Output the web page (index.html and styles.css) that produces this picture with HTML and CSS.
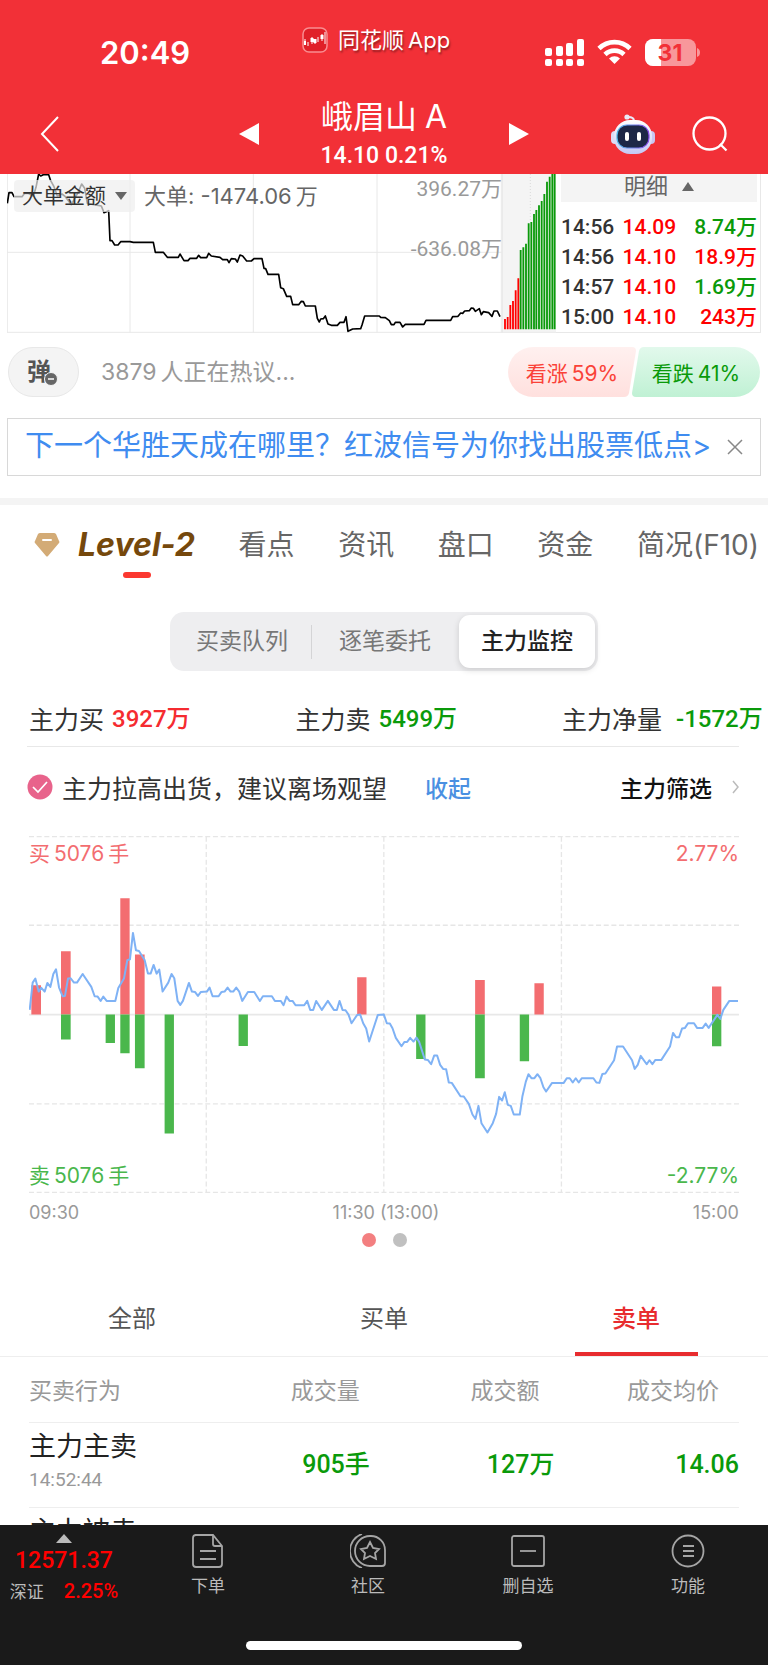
FILE: index.html
```html
<!DOCTYPE html>
<html lang="zh-CN">
<head>
<meta charset="utf-8">
<meta name="viewport" content="width=device-width, initial-scale=1">
<title>峨眉山A</title>
<link rel="stylesheet" href="styles.css">
</head>
<body>
<header class="top">
  <div class="status">
    <time class="clock">20:49</time>
    <div class="app">
      <svg class="app-icon" viewBox="0 0 26 26" aria-hidden="true"><rect x="1" y="1" width="24" height="24" rx="6" fill="#e02028" stroke="#f98d91" stroke-width="1.5"/><g stroke="#fff"><path d="M2 16h2M8.500 13h3M11.500 14h3M18.500 10h3" stroke-width="4"/><path d="M3 12v6M6 15v4M10 10v7M13 12v5M16 10v5M20 7v7M23 5v12" stroke-width="1"/></g></svg>
      <span>同花顺<span class="num">App</span></span>
    </div>
    <div class="signals">
      <svg width="39" height="27" viewBox="0 0 39 27" fill="#fff" aria-hidden="true"><rect x="0" y="9" width="7" height="8" rx="2"/><rect x="11" y="7" width="7" height="10" rx="2"/><rect x="21" y="4" width="7" height="13" rx="2"/><rect x="32" y="0" width="7" height="17" rx="2"/><rect x="0" y="20" width="7" height="7" rx="2"/><rect x="11" y="20" width="7" height="7" rx="2"/><rect x="21" y="20" width="7" height="7" rx="2"/><rect x="32" y="20" width="7" height="7" rx="2"/></svg>
      <svg width="35" height="26" viewBox="0 0 35 26" fill="none" stroke="#fff" stroke-width="4.6" aria-hidden="true"><path d="M2 9.500a22 22 0 0 1 31 0"/><path d="M8 15.500a13.500 13.500 0 0 1 19 0"/><path d="M17.500 25l-5.500-5.500a8 8 0 0 1 11 0z" fill="#fff" stroke="none"/></svg>
      <svg width="55" height="27" viewBox="0 0 55 27" role="img" aria-label="31"><defs><clipPath id="cell"><rect width="51" height="27" rx="8"/></clipPath></defs><g clip-path="url(#cell)"><rect width="51" height="27" fill="#f8979b"/><rect width="16" height="27" fill="#fff"/></g><path d="M52 9q3 1 3 4.500t-3 4.500z" fill="#f8979b"/><text class="battery-text" x="25" y="22" text-anchor="middle">31</text></svg>
    </div>
  </div>
  <div class="nav">
    <button class="icon-btn" aria-label="返回"><svg width="20" height="36" viewBox="0 0 20 36" fill="none" stroke="#fff" stroke-width="2"><path d="M18 1L2 18l16 17"/></svg></button>
    <div class="stock">
      <button class="icon-btn" aria-label="上一只"><svg width="20" height="22" viewBox="0 0 20 22" fill="#fff"><path d="M20 0v22L0 11z"/></svg></button>
      <div class="stock-name"><h1>峨眉山<span class="num">A</span></h1><p>14.10 0.21%</p></div>
      <button class="icon-btn" aria-label="下一只"><svg width="20" height="22" viewBox="0 0 20 22" fill="#fff"><path d="M0 0v22l20-11z"/></svg></button>
    </div>
    <div class="nav-tools">
      <button class="icon-btn" aria-label="助手"><svg width="44" height="40" viewBox="0 0 44 40"><defs><linearGradient id="shell" x1="0" y1="0" x2="0" y2="1"><stop offset="0" stop-color="#fff"/><stop offset="1" stop-color="#c4c8f4"/></linearGradient><linearGradient id="rim"><stop offset="0" stop-color="#4fb8e8"/><stop offset="1" stop-color="#8a48ea"/></linearGradient></defs><path d="M23 7q0-4-6-4" fill="none" stroke="#e9e9f8" stroke-width="2"/><circle cx="16" cy="3" r="2.600" fill="#e9e9f8"/><rect x="0" y="17" width="8" height="13" rx="4" fill="#dcdcf6"/><rect x="36" y="17" width="8" height="13" rx="4" fill="#c9c6f2"/><rect x="3" y="6" width="38" height="34" rx="16" fill="url(#shell)"/><rect x="6" y="11" width="32" height="23" rx="10" fill="#1d2746" stroke="url(#rim)" stroke-width="1.2"/><rect x="14" y="18" width="4" height="9" rx="2" fill="#fff"/><rect x="26" y="18" width="4" height="9" rx="2" fill="#fff"/></svg></button>
      <button class="icon-btn" aria-label="搜索"><svg width="36" height="36" viewBox="0 0 36 36" fill="none" stroke="#fff" stroke-width="2.300"><circle cx="17.500" cy="17.500" r="16"/><path d="M28 28l6.500 6.500"/></svg></button>
    </div>
  </div>
</header>

<main class="content">
  <section class="flow">
    <div class="flow-chart">
      <svg viewBox="21 12 1485 477" aria-hidden="true"><g stroke="#e8e8e8" stroke-width="3" fill="none"><path d="M22 12v476M390 12v476M760 12v476M1131 12v476M1504 12v476M21 247h1485M21 487h1485"/></g>
      <polyline fill="none" stroke="#000" stroke-width="5" stroke-linejoin="round" points="22,100 27,68 36,68 42,80 66,80 74,70 84,70 100,78 108,52 116,12 122,18 130,14 146,14 152,32 162,50 172,78 186,72 196,80 214,104 234,68 245,42 254,55 262,100 282,104 304,108 312,128 326,122 330,212 336,212 344,225 354,225 362,215 390,215 400,217 460,217 466,247 490,247 502,262 535,262 540,252 552,272 564,272 570,265 590,265 596,256 602,263 620,263 626,250 634,258 660,262 668,269 682,269 687,278 694,266 706,267 712,276 720,255 728,258 740,273 754,273 762,266 786,266 792,295 797,296 804,313 836,313 842,353 850,356 860,379 872,379 878,404 896,404 904,394 910,395 916,408 946,408 952,445 958,456 962,447 970,446 976,438 984,462 994,466 1012,466 1020,457 1032,457 1038,440 1044,484 1058,477 1082,476 1086,465 1094,438 1138,438 1142,442 1156,443 1168,452 1174,464 1182,464 1186,457 1200,457 1208,471 1216,463 1272,463 1278,451 1352,451 1358,440 1374,439 1382,429 1388,430 1394,423 1408,422 1414,414 1420,415 1426,424 1438,416 1444,434 1450,425 1466,428 1476,439 1482,423 1492,423 1500,440"/></svg>
      <div class="flow-head"><button class="chip">大单金额<i class="tri down"></i></button><span class="flow-value">大单: -1474.06<span class="wan">万</span></span></div>
      <div class="flow-scale"><span>396.27万</span><span>-636.08万</span></div>
    </div>
    <svg class="flow-bars" viewBox="366 12 162 477" aria-hidden="true"><path fill="#f4f4f4" d="M366 12h162v475H366z"/><path stroke="#ccc" stroke-width="2" stroke-dasharray="3 6" d="M451 12v140"/><path stroke="#f00" stroke-width="5.500" d="M375 478v-31M383 478v-37M391 478v-73M399 478v-85M407 478V361M415 478V325"/><path stroke="#0a9a0a" stroke-width="5.500" d="M422 478V240M430 478V232M438 478V221M446 478V160M454 478V156M462 478V132M469 478V120M477 478V106M485 478V93M493 478V72M501 478V35M509 478V20M517 478V12M524 478V12"/><path stroke="#e8e8e8" stroke-width="3" d="M367 12v476M366 487h162"/></svg>
    <div class="deals">
      <button class="deals-head">明细<i class="tri up"></i></button>
      <table class="deals-table">
        <tr><td>14:56</td><td class="red">14.09</td><td class="green">8.74万</td></tr>
        <tr><td>14:56</td><td class="red">14.10</td><td class="red">18.9万</td></tr>
        <tr><td>14:57</td><td class="red">14.10</td><td class="green">1.69万</td></tr>
        <tr><td>15:00</td><td class="red">14.10</td><td class="red">243万</td></tr>
      </table>
    </div>
  </section>

  <section class="talk">
    <button class="barrage" aria-label="弹幕"><span class="barrage-char">弹</span><svg class="barrage-off" width="14" height="14" viewBox="0 0 14 14"><circle cx="7" cy="7" r="6.500" fill="#666" stroke="#f4f4f4"/><path d="M4 7h6" stroke="#fff" stroke-width="1.500"/></svg></button>
    <span class="talk-text">3879<span class="wan">人正在热议...</span></span>
    <div class="vote">
      <button class="vote-btn up-vote"><svg viewBox="0 0 128 50" preserveAspectRatio="none" aria-hidden="true"><defs><linearGradient id="vu" x1="0" y1="0" x2="0" y2="1"><stop offset="0" stop-color="#fff0ef"/><stop offset="1" stop-color="#ffe0de"/></linearGradient></defs><path fill="url(#vu)" d="M25 0h99q4 0 4 4l-7 42q-1 4-5 4H25a25 25 0 0 1 0-50z"/></svg><span>看涨<span class="num">59%</span></span></button>
      <button class="vote-btn down-vote"><svg viewBox="0 0 128 50" preserveAspectRatio="none" aria-hidden="true"><defs><linearGradient id="vd" x1="0" y1="0" x2="0" y2="1"><stop offset="0" stop-color="#e2f9ec"/><stop offset="1" stop-color="#c0f1d4"/></linearGradient></defs><path fill="url(#vd)" d="M12 0h91a25 25 0 0 1 0 50H4q-4 0-4-4L7 4q1-4 5-4z"/></svg><span>看跌<span class="num">41%</span></span></button>
    </div>
  </section>

  <aside class="promo">
    <a href="#">下一个华胜天成在哪里？红波信号为你找出股票低点&gt;</a>
    <button class="icon-btn" aria-label="关闭"><svg width="16" height="16" viewBox="0 0 16 16" stroke="#888" stroke-width="1.500"><path d="M1 1l14 14M15 1L1 15"/></svg></button>
  </aside>

  <nav class="tabs">
    <a class="tab level" href="#"><svg width="26" height="24" viewBox="0 0 26 24" aria-hidden="true"><path d="M6 0h14q1 0 2 1l3 7q1 1 0 2L14 23q-1 1-2 0L1 10Q0 9 1 8l3-7q1-1 2-1z" fill="#d3ab76"/><path d="M9 7h8" stroke="#fff" stroke-width="2" stroke-linecap="round"/></svg><span class="level-name">Level-2</span></a>
    <a class="tab" href="#">看点</a>
    <a class="tab" href="#">资讯</a>
    <a class="tab" href="#">盘口</a>
    <a class="tab" href="#">资金</a>
    <a class="tab" href="#">简况(F10)</a>
  </nav>

  <div class="segment">
    <button>买卖队列</button><button>逐笔委托</button><button class="on">主力监控</button>
  </div>

  <section class="monitor">
    <div class="stats">
      <span>主力买<b class="buy">3927万</b></span>
      <span>主力卖<b class="sell">5499万</b></span>
      <span>主力净量<b class="sell net">-1572万</b></span>
    </div>
    <div class="advice">
      <svg width="26" height="26" viewBox="0 0 26 26" aria-hidden="true"><circle cx="13" cy="13" r="12.500" fill="#e8638b"/><path d="M6 13l5 5 9-10" fill="none" stroke="#fff" stroke-width="1.700"/></svg>
      <span class="advice-text">主力拉高出货，建议离场观望</span>
      <button class="fold">收起</button>
      <button class="filter">主力筛选<svg width="7" height="14" viewBox="0 0 7 14" fill="none" stroke="#bbb" stroke-width="1.500"><path d="M1 1l5 6-5 6"/></svg></button>
    </div>
    <figure class="chart">
      <svg viewBox="87 46 2131 1072" aria-hidden="true">
        <g stroke="#e6e6e6" stroke-width="4" stroke-dasharray="15 8" fill="none"><path d="M87 48h2131M87 314h2131M87 850h2131M87 1116h2131M619 48v1068M1152 48v1068M1685 48v1068"/></g>
        <path stroke="#e8e8e8" stroke-width="5" d="M87 582h2131"/>
        <g fill="#f36d70"><path d="M94 494h29v88H94zM183 392h29v190h-29zM361 233h28v349h-28zM405 402h29v180h-29zM1072 470h28v112h-28zM1426 478h29v104h-29zM1604 488h28v94h-28zM2137 498h28v84h-28z"/></g>
        <g fill="#4ab74c"><path d="M183 582h29v75h-29zM317 582h28v85h-28zM361 582h28v116h-28zM405 582h29v161h-29zM494 582h28v357h-28zM716 582h28v94h-28zM1249 582h28v133h-28zM1426 582h29v191h-29zM1560 582h28v140h-28zM2137 582h28v95h-28z"/></g>
        <polyline fill="none" stroke="#7fb2f5" stroke-width="6" stroke-linejoin="round" points="89,568 98,486 106,474 116,513 124,502 134,513 142,487 151,499 160,460 168,446 177,500 188,527 195,526 204,474 212,473 222,486 231,486 248,460 274,499 284,527 293,528 302,541 310,528 320,541 346,541 355,502 372,474 382,419 390,416 399,337 408,389 417,391 434,418 444,459 452,459 461,433 470,459 478,447 488,513 505,486 515,460 523,473 533,541 541,553 549,541 567,487 576,513 585,514 594,526 603,514 621,513 629,501 638,527 656,527 665,514 674,513 683,501 692,513 700,513 709,501 718,513 727,541 744,514 763,514 780,541 789,527 816,527 825,541 843,541 851,554 860,528 869,541 878,541 887,554 913,554 922,541 931,568 940,568 949,541 966,568 984,541 1002,568 1011,568 1019,541 1028,568 1037,569 1046,582 1055,608 1072,583 1081,582 1090,608 1099,624 1108,663 1134,583 1152,582 1161,608 1170,609 1178,623 1188,652 1205,677 1214,664 1222,664 1231,652 1241,663 1250,651 1258,664 1275,717 1284,718 1294,731 1303,705 1312,705 1321,733 1330,745 1339,746 1347,786 1356,787 1382,827 1392,828 1407,850 1418,882 1427,895 1436,856 1445,908 1463,936 1479,908 1489,880 1498,829 1507,840 1515,815 1524,853 1533,856 1542,882 1560,882 1568,827 1578,784 1586,761 1595,773 1604,773 1613,761 1622,773 1631,800 1639,813 1657,787 1692,787 1701,773 1710,773 1719,786 1728,773 1737,786 1746,773 1781,773 1790,786 1799,787 1808,760 1817,759 1843,719 1852,678 1870,678 1897,719 1905,745 1914,733 1923,706 1941,731 1949,719 1958,731 1967,718 1985,718 2011,678 2020,637 2029,650 2038,650 2047,624 2056,622 2065,608 2083,608 2092,622 2109,622 2118,609 2127,622 2153,583 2162,595 2171,568 2189,541 2215,541"/>
      </svg>
      <div class="chart-label top-label"><span class="buy-soft">买<span class="num">5076</span>手</span><span class="buy-soft">2.77%</span></div>
      <div class="chart-label bottom-label"><span class="sell-soft">卖<span class="num">5076</span>手</span><span class="sell-soft">-2.77%</span></div>
    </figure>
    <div class="axis"><span>09:30</span><span>11:30 (13:00)</span><span>15:00</span></div>
    <div class="dots"><i class="dot active"></i><i class="dot"></i></div>
  </section>

  <div class="order-tabs">
    <button>全部</button><button>买单</button><button class="on">卖单</button>
  </div>

  <table class="orders">
    <colgroup><col><col class="c-vol"><col class="c-amt"><col class="c-price"></colgroup>
    <thead><tr><th>买卖行为</th><th class="h-vol">成交量</th><th class="h-amt">成交额</th><th class="h-price">成交均价</th></tr></thead>
    <tbody>
      <tr><td><span class="action">主力主卖</span><time>14:52:44</time></td><td>905手</td><td>127万</td><td>14.06</td></tr>
      <tr><td><span class="action">主力被卖</span></td><td></td><td></td><td></td></tr>
    </tbody>
  </table>
</main>

<footer class="bottom">
  <div class="bar">
    <button class="index"><i class="tri up light"></i><span class="index-value">12571.37</span><span class="index-row">深证<b>2.25%</b></span></button>
    <button class="bar-item"><svg width="34" height="34" viewBox="0 0 34 34"><path d="M4 1h18l9 11v18q0 3-3 3H5q-3 0-3-3V4q0-3 3-3z"/><path d="M22 1v9q0 2 2 2h7M9 17h16M9 25h16"/></svg>下单</button>
    <button class="bar-item"><svg width="36" height="34" viewBox="0 0 36 34"><path d="M20 2h1a14 14 0 0 1 14 14v13q0 3-3 3H20A15 15 0 0 1 20 2zM12 0A18 18 0 0 0 12 34M20 8l3 6 6 1-4 4 1 6-6-3-6 3 1-6-4-4 6-1z"/></svg>社区</button>
    <button class="bar-item"><svg width="34" height="34" viewBox="0 0 34 34"><rect x="1" y="2" width="32" height="30" rx="2"/><path d="M9 17h16"/></svg>删自选</button>
    <button class="bar-item"><svg width="34" height="34" viewBox="0 0 34 34"><circle cx="17" cy="17" r="15.500"/><path d="M12 12h11M12 17h11M12 22h11"/></svg>功能</button>
  </div>
  <div class="home"></div>
</footer>
</body>
</html>
```
FILE: styles.css
```css
* { box-sizing: border-box; }
body {
  margin: 0;
  height: 100vh;
  display: flex;
  flex-direction: column;
  background: #fff;
  color: #333;
  font-family: Inter, "Noto Sans CJK SC", sans-serif;
  font-size: 24px;
}
button {
  border: 0;
  padding: 0;
  background: none;
  font: inherit;
  color: inherit;
}
a { color: inherit; text-decoration: none; }
h1, p, figure { margin: 0; }
svg { display: block; }
.num { margin: 0 4px; }
.wan { margin-left: 4px; }
.red { color: #f00; }
.green { color: #0a9a0a; }

.tri {
  display: inline-block;
  border: 6px solid transparent;
}
.tri.down { border-top: 8px solid #666; border-bottom: 0; }
.tri.up { border-bottom: 9px solid #666; border-top: 0; }
.tri.light { border-width: 0 8px 9px; border-bottom-color: #bbb; }

.top { flex: none; background: #f23037; color: #fff; }
.status {
  display: grid;
  grid-template-columns: 202px auto 1fr;
  height: 88px;
  padding: 20px 68px 0 100px;
}
.clock { font-size: 31px; font-weight: 600; line-height: 66px; }
.app {
  display: flex;
  align-items: center;
  gap: 10px;
  height: 40px;
  font-size: 22px;
  line-height: 36px;
  text-shadow: 1px 2px 2px rgba(0, 0, 0, .4);
}
.app-icon { width: 26px; height: 26px; }
.app .num { margin-right: 0; }
.signals {
  display: flex;
  justify-content: flex-end;
  align-items: center;
  gap: 13px;
  height: 64px;
}
.battery-text { font: 700 23px Inter, sans-serif; fill: #f23037; }
.nav {
  display: grid;
  grid-template-columns: 1fr auto 1fr;
  align-items: center;
  height: 86px;
  padding: 6px 40px 0;
}
.icon-btn { display: block; }
.stock { display: flex; align-items: center; gap: 58px; }
.stock-name { min-width: 134px; text-align: center; }
.stock-name h1 { font-size: 32px; font-weight: 400; line-height: 44px; white-space: nowrap; }
.stock-name .num { margin: 0 0 0 8px; }
.stock-name p { font: 500 23px/34px Roboto, sans-serif; white-space: nowrap; }
.nav-tools { display: flex; justify-content: flex-end; align-items: center; gap: 37px; }

.content { flex: 1; min-height: 0; overflow: hidden; }
.flow {
  display: grid;
  grid-template-columns: 495fr 54fr 205fr;
  padding: 0 7px;
}
.flow-chart { position: relative; }
.flow-chart svg, .flow-bars { width: 100%; height: auto; }
.flow-head {
  position: absolute;
  top: 6px;
  left: 7px;
  display: flex;
  align-items: center;
  gap: 9px;
  line-height: 32px;
}
.chip {
  display: flex;
  align-items: center;
  gap: 9px;
  padding: 0 8px;
  border-radius: 4px;
  background: rgba(238, 238, 238, .7);
  font-size: 21px;
  color: #333;
}
.flow-value { font-size: 22px; color: #666; }
.flow-scale {
  position: absolute;
  top: 0;
  right: 0;
  display: grid;
  gap: 30px;
  text-align: right;
  color: #999;
  font: 400 21px/30px Roboto, "Noto Sans CJK SC", sans-serif;
}
.deals {
  border: solid #e8e8e8;
  border-width: 0 1px 1px 0;
  padding: 0 3px 0 5px;
}
.deals-head {
  display: flex;
  justify-content: center;
  align-items: center;
  gap: 14px;
  width: 100%;
  height: 28px;
  margin-bottom: 10px;
  padding-bottom: 4px;
  background: #f4f4f4;
  color: #666;
  font-size: 22px;
  line-height: 24px;
}
.deals-table {
  width: 100%;
  border-collapse: collapse;
  font: 500 21px/30px Roboto, "Noto Sans CJK SC", sans-serif;
}
.deals-table td { padding: 0; }
.deals-table td:last-child { text-align: right; }

.talk { display: flex; align-items: center; padding: 14px 8px 0; }
.barrage {
  position: relative;
  width: 71px;
  height: 50px;
  border: 1px solid #e8e8e8;
  border-radius: 25px;
  background: #f4f4f4;
}
.barrage-char { display: block; padding-right: 9px; font-weight: 700; line-height: 46px; color: #555; }
.barrage-off { position: absolute; right: 20px; bottom: 10px; }
.talk-text { margin-left: 22px; color: #999; font-size: 23px; line-height: 46px; }
.vote { display: flex; margin-left: auto; }
.vote-btn { position: relative; width: 128px; height: 50px; font-size: 21px; }
.vote-btn svg { position: absolute; inset: 0; width: 100%; height: 100%; }
.vote-btn > span { position: relative; }
.vote-btn .num { margin-right: 0; }
.up-vote { color: #fa4238; margin-right: -4px; }
.down-vote { color: #0a9a0a; }

.promo {
  display: flex;
  align-items: center;
  justify-content: space-between;
  height: 58px;
  margin: 21px 7px 22px;
  padding: 0 17px;
  border: 1px solid #d8d8d8;
  color: #3f8cf0;
  font-size: 29px;
  line-height: 54px;
  white-space: nowrap;
}
.promo a { padding-bottom: 2px; }
.tabs {
  display: flex;
  justify-content: space-between;
  padding: 19px 9px 0 34px;
  border-top: 7px solid #f4f4f4;
  color: #666;
  font-size: 28px;
  line-height: 42px;
  white-space: nowrap;
}
.level { position: relative; display: flex; align-items: center; gap: 18px; }
.level-name { font-size: 32px; font-weight: 700; font-style: italic; color: #75480c; }
.level::after {
  content: "";
  position: absolute;
  left: 89px;
  top: 48px;
  width: 28px;
  height: 6px;
  border-radius: 3px;
  background: #fb3830;
}
.segment {
  display: grid;
  grid-template-columns: 138fr 148fr 136fr;
  width: 428px;
  margin: 46px auto 0;
  padding: 3px;
  border-radius: 14px;
  background: #eeeef0;
  color: #777;
  font-size: 23px;
  line-height: 53px;
}
.segment button + button:not(.on) { background: linear-gradient(#d4d4d6, #d4d4d6) 0 50% / 1px 34px no-repeat; }
.segment .on {
  border-radius: 11px;
  background: #fff;
  box-shadow: 0 2px 6px rgba(0, 0, 0, .15);
  color: #222;
  font-weight: 500;
}

.monitor { padding: 0 29px; }
.stats {
  display: grid;
  grid-template-columns: 1fr 1fr 206px;
  margin-right: -29px;
  padding-top: 28px;
  font-size: 25px;
  line-height: 42px;
  white-space: nowrap;
}
.stats span { display: flex; }
.stats b {
  margin-left: 8px;
  font: 500 24px/40px Roboto, "Noto Sans CJK SC", sans-serif;
}
.stats .net { margin-left: 14px; }
.buy { color: #f52b30; }
.sell { color: #0a9a0a; }
.advice {
  display: flex;
  align-items: center;
  height: 80px;
  margin: 5px 0 0 -2px;
  border-top: 1px solid #e8e8e8;
  white-space: nowrap;
}
.advice-text { margin-left: 9px; font-size: 25px; }
.fold { margin-left: 38px; color: #4a90e2; font-size: 23px; font-weight: 500; }
.filter {
  display: flex;
  align-items: center;
  gap: 20px;
  margin-left: auto;
  color: #111;
  font-size: 23px;
  font-weight: 500;
}
.chart { position: relative; margin-top: 10px; }
.chart svg { width: 100%; height: auto; }
.chart-label {
  position: absolute;
  left: 0;
  right: 0;
  display: flex;
  justify-content: space-between;
  font-size: 21px;
  line-height: 30px;
}
.top-label { top: 3px; }
.bottom-label { bottom: 2px; }
.buy-soft { color: #f36d70; }
.sell-soft { color: #4ab74c; }
.axis {
  display: flex;
  justify-content: space-between;
  padding: 6px 0;
  color: #999;
  font-size: 18px;
  line-height: 28px;
}
.dots { display: flex; justify-content: center; gap: 17px; }
.dot { width: 14px; height: 14px; border-radius: 50%; background: #c0c0c0; }
.dot.active { background: #f37f80; }

.order-tabs {
  display: flex;
  margin-top: 35px;
  padding: 0 6px;
  border-bottom: 1px solid #eee;
  color: #555;
  line-height: 74px;
}
.order-tabs button { flex: 1; }
.order-tabs .on {
  background: linear-gradient(#e82c2f, #e82c2f) 50% 100% / 123px 4px no-repeat;
  color: #e82c2f;
  font-weight: 500;
}
.orders {
  width: calc(100% - 58px);
  margin: 0 29px;
  border-collapse: collapse;
  table-layout: fixed;
  text-align: right;
}
.c-vol, .c-amt, .c-price { width: 26%; }
.orders th {
  height: 65px;
  padding: 0;
  border-bottom: 1px solid #eee;
  color: #999;
  font-size: 23px;
  font-weight: 400;
}
.orders .h-vol { padding-right: 10px; }
.orders .h-amt { padding-right: 15px; }
.orders .h-price { padding-right: 20px; }
.orders th:first-child, .orders td:first-child { text-align: left; }
.orders td {
  height: 85px;
  padding: 0;
  border-bottom: 1px solid #eee;
  vertical-align: middle;
  color: #0a9a0a;
  font: 500 25px/30px Roboto, "Noto Sans CJK SC", sans-serif;
}
.orders td:first-child { padding-top: 6px; vertical-align: top; }
.action { display: block; color: #222; font-size: 27px; font-weight: 400; line-height: 36px; }
.orders time { display: block; color: #999; font-size: 19px; font-weight: 400; line-height: 30px; }

.bottom { flex: none; background: #1a1a1a; color: #bbb; }
.bar {
  display: grid;
  grid-template-columns: 128px repeat(4, 1fr);
  height: 116px;
  padding: 9px 0 0;
  font-size: 17px;
}
.index { display: flex; flex-direction: column; align-items: center; height: 74px; }
.index-value { color: #f00; font: 500 23px/36px Roboto, sans-serif; }
.index-row { color: #bbb; line-height: 24px; }
.index b { margin-left: 20px; color: #f00; font: 500 20px Roboto, sans-serif; }
.bar-item { display: flex; flex-direction: column; align-items: center; gap: 6px; line-height: 24px; height: 74px; }
.bar-item svg { fill: none; stroke: #a5a5a5; stroke-width: 1.800; }
.home { width: 276px; height: 9px; margin: 0 auto 15px; border-radius: 5px; background: #fff; }
```
